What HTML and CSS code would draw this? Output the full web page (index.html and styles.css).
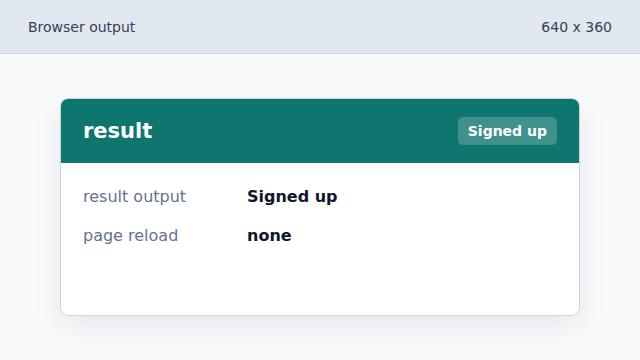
FILE: index.html
```html
<!DOCTYPE html>
<html>
<head>
<meta charset="utf-8">
<link rel="stylesheet" href="styles.css">
</head>
<body>
<div class="topbar">
  <span class="topbar-title">Browser output</span>
  <span class="topbar-size">640 x 360</span>
</div>
<main class="stage">
  <section class="card">
    <header class="card-head">
      <h1 class="card-title">result</h1>
      <span class="badge">Signed up</span>
    </header>
    <div class="card-body">
      <div class="row"><span class="label">result output</span><span class="value">Signed up</span></div>
      <div class="row"><span class="label">page reload</span><span class="value">none</span></div>
    </div>
  </section>
</main>
</body>
</html>
```
FILE: styles.css
```css
* { box-sizing: border-box; }
html, body { margin: 0; padding: 0; }
body {
  width: 640px;
  height: 360px;
  overflow: hidden;
  background: #f8fafc;
  font-family: "DejaVu Sans", sans-serif;
}
.topbar {
  height: 54px;
  background: #e2e8f0;
  border-bottom: 1px solid #cbd5e1;
  display: flex;
  align-items: center;
  justify-content: space-between;
  padding: 0 28px;
  font-size: 14px;
  color: #334155;
}
.stage {
  padding: 44px 60px 0;
}
.card {
  height: 218px;
  background: #ffffff;
  border: 1px solid #cbd5e1;
  border-radius: 8px;
  overflow: hidden;
  box-shadow: 0 10px 30px rgba(15, 23, 42, 0.08);
}
.card-head {
  height: 64px;
  background: #0f766e;
  display: flex;
  align-items: center;
  justify-content: space-between;
  padding: 0 22px;
}
.card-title {
  margin: 0;
  font-size: 21px;
  font-weight: bold;
  color: #ffffff;
}
.badge {
  background: rgba(255, 255, 255, 0.2);
  color: #ffffff;
  font-size: 14px;
  font-weight: bold;
  border-radius: 5px;
  padding: 0 10px;
  height: 28px;
  line-height: 28px;
}
.card-body {
  padding: 23px 22px 0;
  display: flex;
  flex-direction: column;
  gap: 17px;
}
.row {
  display: flex;
  line-height: 22px;
  font-size: 16px;
}
.label {
  width: 164px;
  color: #64748b;
}
.value {
  color: #0f172a;
  font-weight: bold;
}
```
